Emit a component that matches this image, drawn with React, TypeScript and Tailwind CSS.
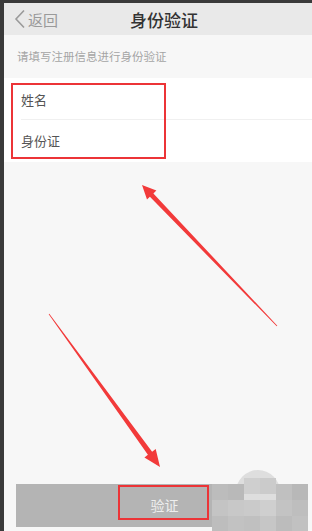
import React from 'react';

const arrowPoints = (
    x1: number, y1: number, x2: number, y2: number,
    headLen: number, headW: number, shaftW: number, tailW: number
) => {
    const dx = x2 - x1;
    const dy = y2 - y1;
    const len = Math.hypot(dx, dy);
    const ux = dx / len;
    const uy = dy / len;
    const nx = -uy;
    const ny = ux;
    const bx = x2 - ux * headLen;
    const by = y2 - uy * headLen;
    const pts = [
        [x2, y2],
        [bx + nx * headW, by + ny * headW],
        [bx + nx * shaftW, by + ny * shaftW],
        [x1 + nx * tailW, y1 + ny * tailW],
        [x1 - nx * tailW, y1 - ny * tailW],
        [bx - nx * shaftW, by - ny * shaftW],
        [bx - nx * headW, by - ny * headW],
    ];
    return pts.map(p => `${p[0].toFixed(1)},${p[1].toFixed(1)}`).join(' ');
};

// blurred watermark cells near the button
const mosaic = [
    { x: 212, y: 484, c: '#bcbcbc' }, { x: 228, y: 484, c: '#b9b9b9' }, { x: 244, y: 478, c: '#cfcfcf' },
    { x: 260, y: 478, c: '#cbcbcb' }, { x: 276, y: 484, c: '#c0c0c0' }, { x: 292, y: 484, c: '#b8b8b8' },
    { x: 212, y: 500, c: '#c4c4c4' }, { x: 228, y: 500, c: '#c8c8c8' }, { x: 244, y: 500, c: '#cacaca' },
    { x: 260, y: 500, c: '#cfcfcf' }, { x: 276, y: 500, c: '#c3c3c3' }, { x: 292, y: 500, c: '#bebebe' },
    { x: 212, y: 516, c: '#bdbdbd' }, { x: 228, y: 516, c: '#c2c2c2' }, { x: 244, y: 516, c: '#c0c0c0' },
    { x: 260, y: 516, c: '#c6c6c6' }, { x: 276, y: 516, c: '#bcbcbc' }, { x: 292, y: 516, c: '#c1c1c1' },
];

const App: React.FC = () => {
    return (
        <div
            className="relative w-[312px] h-[531px] overflow-hidden bg-[#3a3a3a] pt-[3px] pl-[4px] flex flex-col"
            style={{ fontFamily: '"Noto Sans CJK SC", "Noto Sans", sans-serif' }}
        >
            <div className="flex-1 flex flex-col bg-[#f7f7f7]">
                {/* nav bar */}
                <div className="relative h-[32px] bg-[#e9e9e9] flex items-center">
                    <div className="flex items-center pl-[10px] text-[#9a9a9a]">
                        <svg width="12" height="20" viewBox="0 0 12 20" fill="none">
                            <path d="M10 1.5 L2 10 L10 18.5" stroke="#9a9a9a" strokeWidth="1.6" />
                        </svg>
                        <span className="text-[15px] ml-[2px] leading-none">返回</span>
                    </div>
                    <div className="absolute inset-0 flex items-center justify-center pl-[12px]">
                        <span className="text-[17px] font-medium text-[#333] leading-none">身份验证</span>
                    </div>
                </div>

                {/* hint */}
                <div className="h-[43px] flex items-center pl-[13px]">
                    <span className="text-[11.5px] text-[#a5a5a5] leading-none">请填写注册信息进行身份验证</span>
                </div>

                {/* form */}
                <div className="bg-white">
                    <div className="h-[41px] flex items-center pl-[17px] text-[13px] text-[#555] pt-[3px]">姓名</div>
                    <div className="ml-[17px] h-px bg-[#f0f0f0]" />
                    <div className="h-[42px] flex items-center pl-[17px] text-[13px] text-[#555]">身份证</div>
                </div>

                <div className="flex-1" />

                <button className="mx-[12px] mr-[7px] mb-[4px] h-[43px] bg-[#b4b4b4] text-[#eeeeee] text-[14px] flex items-center justify-center pl-[8px]">
                    验证
                </button>
            </div>

            {/* watermark blur */}
            <div className="absolute left-[236px] top-[470px] w-[44px] h-[30px] rounded-t-full bg-[#dedede]" />
            {mosaic.map((m, i) => (
                <div
                    key={i}
                    className="absolute w-[16px] h-[16px]"
                    style={{ left: m.x, top: m.y, background: m.c }}
                />
            ))}

            {/* red annotation boxes */}
            <div className="absolute left-[11px] top-[83px] w-[155px] h-[76px] border-2 border-[#ec3437]" />
            <div className="absolute left-[118px] top-[485px] w-[91px] h-[35px] border-2 border-[#ec3437]" />

            {/* arrows */}
            <svg className="absolute inset-0" width="312" height="531" viewBox="0 0 312 531">
                <polygon points={arrowPoints(277, 326, 142, 185, 14, 6.5, 2.4, 0.4)} fill="#f23a3a" />
                <polygon points={arrowPoints(49, 314, 160, 467, 17, 7, 2.6, 0.4)} fill="#f23a3a" />
            </svg>
        </div>
    );
};

export default App;
